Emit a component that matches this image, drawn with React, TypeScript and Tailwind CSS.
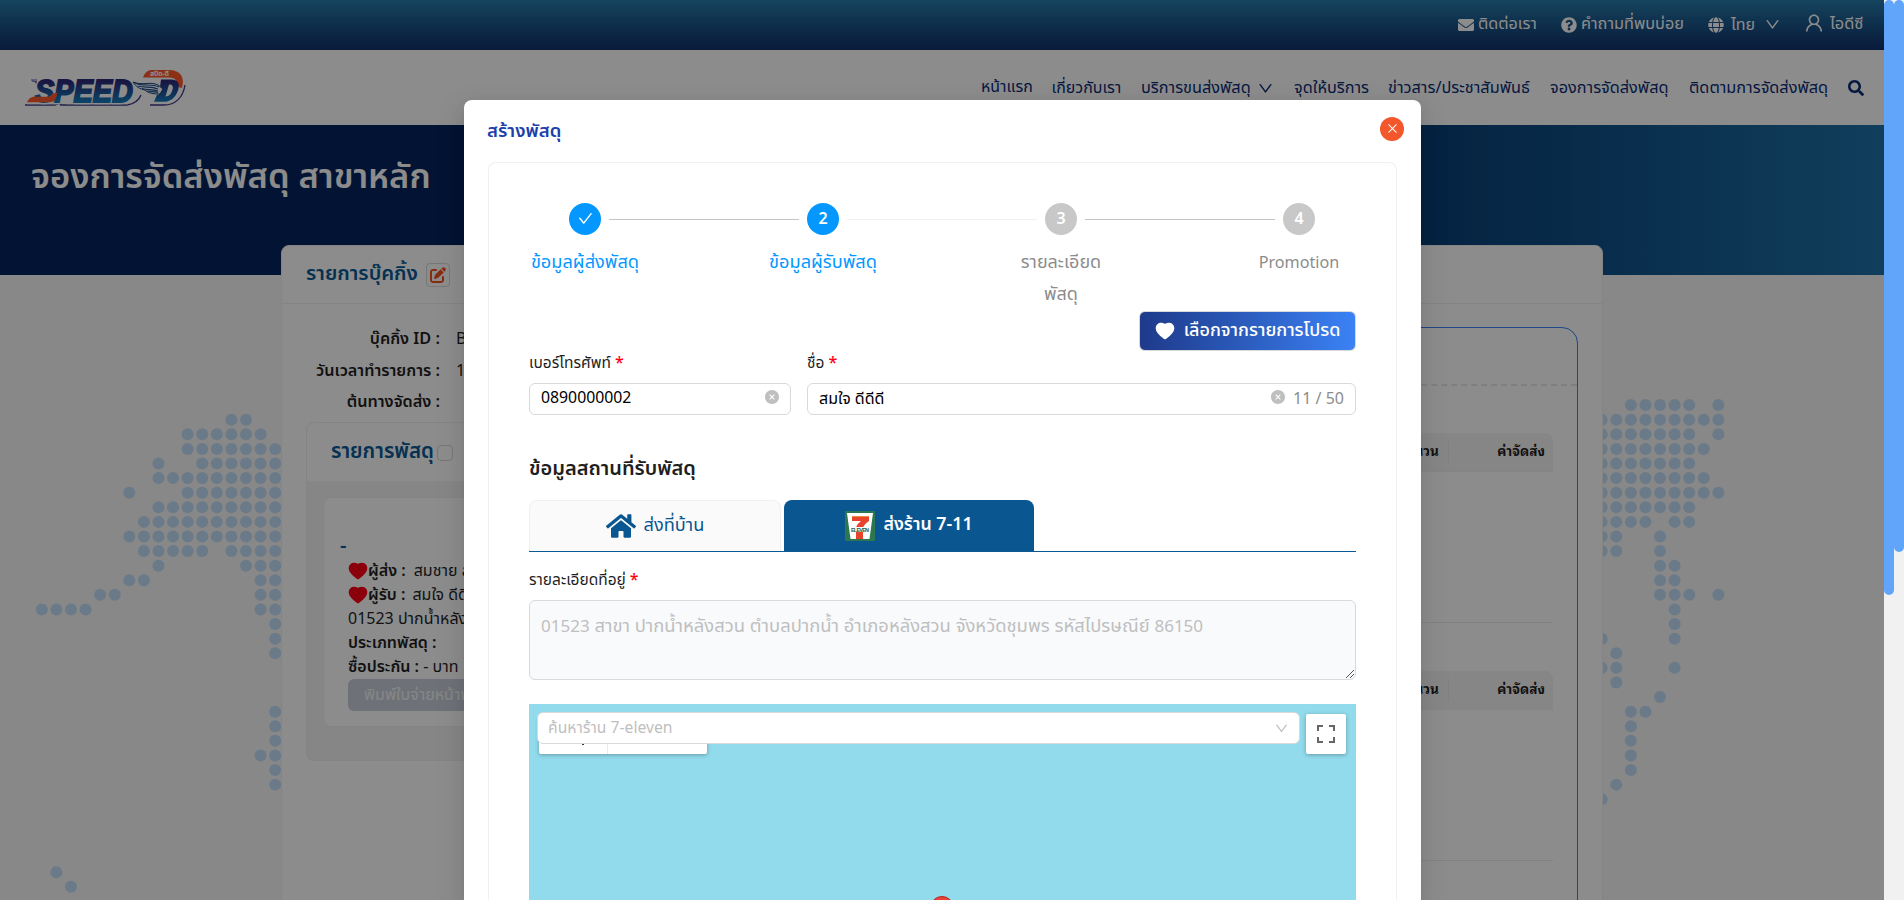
import React from "react";
import { FaEnvelope, FaQuestionCircle, FaGlobe, FaSearch, FaHome } from "react-icons/fa";
import { FaPenToSquare } from "react-icons/fa6";
import { AiOutlineDown, AiOutlineUser, AiOutlineCheck, AiFillCloseCircle, AiFillHeart, AiOutlineClose } from "react-icons/ai";

type Row = [number, number[]];

const range = (a: number, b: number) => Array.from({ length: b - a + 1 }, (_, i) => a + i);

const WEST: Row[] = [
  [0, [13, 14]],
  [1, range(10, 15)],
  [2, range(10, 16)],
  [3, [8, ...range(11, 16)]],
  [4, range(8, 16)],
  [5, [6, ...range(10, 16)]],
  [6, range(8, 16)],
  [7, range(7, 16)],
  [8, range(6, 16)],
  [9, [...range(7, 11), ...range(13, 16)]],
  [10, [8, 14, 15, 16]],
  [11, [6, 7, 15, 16]],
  [12, [4, 5, 15, 16]],
  [13, [0, 1, 2, 3, 15, 16]],
  [14, [16]],
  [15, [16]],
  [16, [16]],
  [20, [16]],
  [21, [16]],
  [22, [16]],
  [23, [15, 16]],
  [24, [16]],
  [25, [16]],
  [31, [1]],
  [32, [2]],
];

const EAST: Row[] = [
  [-1, [2, 3, 4, 5, 6, 8]],
  [0, range(0, 8)],
  [1, [...range(0, 6), 8]],
  [2, range(0, 7)],
  [3, range(0, 6)],
  [4, range(0, 7)],
  [5, range(0, 8)],
  [6, range(0, 6)],
  [7, [0, 1, 2, 3, 5, 6]],
  [8, [0, 1, 4]],
  [9, [0, 1, 4]],
  [10, [4, 5]],
  [11, [4, 5]],
  [12, [4, 5, 6, 8]],
  [13, [5]],
  [14, [5]],
  [15, [0, 5]],
  [16, [1]],
  [17, [0, 1, 5]],
  [18, [1]],
  [19, [4]],
  [20, [2, 3]],
  [21, [2]],
  [22, [2]],
  [23, [2]],
  [24, [2]],
  [25, [1]],
  [26, [0]],
];

function Dots({ rows, x }: { rows: Row[]; x: number }) {
  return (
    <>
      {rows.flatMap(([j, ks]) =>
        ks.map((k) => <circle key={`${j}-${k}`} cx={x + k * 14.585} cy={144.7 + j * 14.597} r={6} />)
      )}
    </>
  );
}

function WorldMap() {
  return (
    <svg className="absolute left-0 top-[275px] h-[625px] w-[1884px]" viewBox="0 0 1884 625" fill="#c1dff7">
      <Dots rows={WEST} x={41.8} />
      <Dots rows={EAST} x={1601.7} />
    </svg>
  );
}

function Logo() {
  const word = {
    x: 11,
    y: 33.5,
    fontSize: 31,
    fontWeight: 700,
    fontStyle: "italic",
    fontFamily: "Liberation Sans, sans-serif",
    textLength: 98,
    lengthAdjust: "spacingAndGlyphs" as const,
  };
  return (
    <svg className="h-[40px] w-[164px] overflow-visible" viewBox="0 0 164 40">
      <defs>
        <linearGradient id="ink" gradientUnits="userSpaceOnUse" x1="0" y1="10" x2="0" y2="34">
          <stop offset="0.15" stopColor="#2d2a7a" />
          <stop offset="0.95" stopColor="#1478b8" />
        </linearGradient>
      </defs>
      <path d="M1 37h30l4-2 2 2h66c7-1 12-5 14-10" fill="none" stroke="#3d3a8a" strokeWidth="1.400" />
      <path d="M3 35.500h30M42 35.500h62" fill="none" stroke="#fdfdff" strokeWidth="1.500" />
      <text {...word} fill="#fff" stroke="#fff" strokeWidth="4.500" strokeLinejoin="round">
        SPEED
      </text>
      <text {...word} fill="url(#ink)" stroke="url(#ink)" strokeWidth="1.800">
        SPEED
      </text>
      <path d="M8 13l5 1-2 1M7 12h6" fill="none" stroke="#3d3a8a" strokeWidth="0.800" />
      <path d="M3 34.200c2-4 4-5.500 8-5.500h12c3 0 4-1 5-3l5-1c0 2 0 3-1 5-1 3-3 4.500-7 4.500Z" fill="#ff5a2c" />
      <path
        d="M119 10c2-6 5-8 11-8h16c12 0 16 8 13 17-3 10-9 16-18 16h-14l3-8Z"
        fill="#fff"
        stroke="#fff"
        strokeWidth="2.500"
      />
      <path d="M126 37h14c11 0 19-7 21-20" fill="none" stroke="#3d3a8a" strokeWidth="1.300" />
      <path d="M119 9.500c2-5 4-7.500 10-7.500h16c12 0 16 8 13 18l-6-1.500c2-6-1-9-7-9Z" fill="#ff5a2c" />
      <path
        fillRule="evenodd"
        d="M137 11.500h10c8 0 9 5 7 11-3 8-8 11.300-15 11.300h-9l3-7h2Zm8 5-3.500 12c4 0 6-3 7-7 1-3 0-5-3.500-5Z"
        fill="url(#ink)"
      />
      <path d="M109 14c10 4 17-1 25 3l5 4-3 5c-7 0-12-1-15-4-5-1-9-3-12-8Z" fill="#fff" stroke="#1d4080" strokeWidth="1" />
      <path
        d="M111 15c8 4 16 0 24 4M114 18c7 2 13 0 20 3M118 20.500c6 2 10 0 16 2.500M123 23c4 1 7 0 11 1.500"
        fill="none"
        stroke="#1d5090"
        strokeWidth="1.200"
      />
      <text x="126" y="8.300" fontSize="7" fill="#fff" fontWeight="700" textLength="19" fontFamily="Noto Sans Thai, sans-serif">
        สปีด-ดี
      </text>
    </svg>
  );
}

function SevenLogo() {
  return (
    <svg className="h-[30px] w-[30px]" viewBox="0 0 30 30">
      <path fill="#2c7650" d="M0 0h30v30H0z" />
      <path fill="#fff" d="M2 2h26l-3.500 26H5.500Z" />
      <path fill="#f08a3c" d="M7 5h17v2H7z" />
      <path fill="#e8442b" d="M7 6h17v4c-4 3-6 5-6 8h-7c0-4 3-6 5-8H7Z" />
      <path fill="#e8442b" d="M11 21h7v7h-7z" />
      <path fill="#fff" d="M5 16h20v5H5z" />
      <text x="6" y="20.700" fontSize="5.500" fontWeight="700" fill="#2c5b46" textLength="18" fontFamily="Liberation Sans, sans-serif">
        ELEVEN
      </text>
    </svg>
  );
}

function TopBar() {
  return (
    <div className="flex h-[50px] items-center bg-linear-to-b from-[#287cab] to-[#103069] pl-[1458px] pb-px text-[16px] text-white">
      <FaEnvelope className="h-4 w-4" />
      <span className="ml-[4px] w-[83px] text-[16.200px]">ติดต่อเรา</span>
      <FaQuestionCircle className="h-4 w-4" />
      <span className="ml-1 w-[127px] text-[16.300px]">คำถามที่พบบ่อย</span>
      <FaGlobe className="h-4 w-4" />
      <span className="ml-[7px] w-[33px]">ไทย</span>
      <AiOutlineDown className="h-[17px] w-[17px]" />
      <AiOutlineUser className="ml-[22px] -mt-1 h-[22px] w-[22px]" />
      <span className="ml-[5px] text-[16.400px]">ไอดีซี</span>
    </div>
  );
}

function Nav() {
  return (
    <div className="flex h-[75px] items-center bg-white pl-[24px] text-[16.300px] text-[#0b2d75]">
      <Logo />
      <div className="ml-[793px] flex items-center pt-px">
        <span className="w-[70.500px] text-[15.900px]">หน้าแรก</span>
        <span className="w-[89.500px] text-[16px]">เกี่ยวกับเรา</span>
        <span className="w-[116px]">บริการขนส่งพัสดุ</span>
        <AiOutlineDown className="h-[17px] w-[17px]" />
        <span className="ml-[20px] w-[94px]">จุดให้บริการ</span>
        <span className="w-[162px]">ข่าวสาร/ประชาสัมพันธ์</span>
        <span className="w-[139px]">จองการจัดส่งพัสดุ</span>
        <span className="w-[159px]">ติดตามการจัดส่งพัสดุ</span>
        <FaSearch className="h-4 w-4" />
      </div>
    </div>
  );
}

function InfoRow({ label, value }: { label: string; value: string }) {
  return (
    <div className="flex h-[31.800px] items-center text-[16.200px]">
      <span className="w-[134px] text-right font-semibold">{label}</span>
      <span className="ml-[16px]">{value}</span>
    </div>
  );
}

function FeeTable() {
  return (
    <div className="h-[190px] border-b border-[#ececec]">
      <div className="flex h-[39px] items-center justify-end rounded-t-lg border-b border-[#f0f0f0] bg-[#f5f5f5] pb-[3px] pr-2 font-['Noto_Sans_Thai_Looped','Noto_Sans',sans-serif] text-[13.600px] font-bold">
        <span>จำนวน</span>
        <span className="ml-[9px] mt-[3px] h-[22px] w-px bg-[#ececec]" />
        <span className="w-[96px] text-right">ค่าจัดส่ง</span>
      </div>
    </div>
  );
}

function BookingCard() {
  return (
    <div className="relative ml-[281px] mt-[-30px] h-[760px] w-[1322px] rounded-t-lg border border-[#f0f0f0] bg-white text-[#1f1f1f]">
      <div className="flex h-[58px] items-center border-b border-[#f0f0f0] pl-[24px]">
        <span className="w-[120px] text-[20.300px] font-semibold text-[#0a5a96]">รายการบุ๊คกิ้ง</span>
        <span className="flex h-[24px] w-[24px] items-center justify-center rounded-[4px] border border-[#d9d9d9]">
          <FaPenToSquare className="h-4 w-4 text-[#f4511e]" />
        </span>
      </div>
      <div className="flex">
        <div className="w-[500px] pl-[24px] pt-[19px]">
          <div className="h-[99px]">
            <InfoRow label="บุ๊คกิ้ง ID :" value="BK" />
            <InfoRow label="วันเวลาทำรายการ :" value="15" />
            <InfoRow label="ต้นทางจัดส่ง :" value="" />
          </div>
          <div className="h-[339px] w-[460px] rounded-lg border border-[#f0f0f0] bg-[#f5f5f5]">
            <div className="flex h-[58px] items-center rounded-t-lg bg-white pl-[24px] pt-px">
              <span className="w-[106px] text-[20.500px] font-semibold text-[#0a5a96]">รายการพัสดุ</span>
              <span className="h-4 w-4 rounded-[4px] border border-[#d9d9d9]" />
            </div>
            <div className="ml-[16px] mt-[16px] h-[230px] w-[420px] rounded-lg border border-[#f0f0f0] bg-white pl-[16px] pt-[37px] text-[16px] leading-[24px]">
              <div className="-mt-px mb-px text-[20px] font-semibold text-[#0a5a96]">-</div>
              <div className="pl-2">
                <div className="flex items-center">
                  <AiFillHeart className="h-5 w-5 scale-[1.100] text-[#ff0015]" />
                  <b className="font-semibold">ผู้ส่ง :</b>
                  <span className="ml-2">สมชาย สุขใจ</span>
                </div>
                <div className="flex items-center">
                  <AiFillHeart className="h-5 w-5 scale-[1.100] text-[#ff0015]" />
                  <b className="font-semibold">ผู้รับ :</b>
                  <span className="ml-[7px]">สมใจ ดีดีดี</span>
                </div>
                <div>01523 ปากน้ำหลังสวน</div>
                <div className="font-semibold">ประเภทพัสดุ :</div>
                <div>
                  <b className="font-semibold">ซื้อประกัน :</b> - บาท
                </div>
                <div className="flex h-8 w-[200px] items-center rounded-md bg-[#c9ced9] pl-4 text-[#f5f5f5]">พิมพ์ใบจ่ายหน้าพัสดุ</div>
              </div>
            </div>
          </div>
        </div>
        <div className="mt-[23px] h-[700px] w-[796px] rounded-t-2xl border border-[#3b82f6]">
          <div className="h-[58px] border-b-2 border-dashed border-[#e8e8e8]" />
          <div className="flex flex-col gap-[48px] pl-6 pr-[24px] pt-[47px]">
            <FeeTable />
            <FeeTable />
          </div>
        </div>
      </div>
    </div>
  );
}

function Step({ n, active, done, children }: { n: number; active?: boolean; done?: boolean; children: React.ReactNode }) {
  return (
    <div className="flex w-[114px] shrink-0 flex-col items-center">
      <div
        className={
          active
            ? "flex h-8 w-8 items-center justify-center rounded-full bg-[#0498ff] text-[16px] font-semibold text-white"
            : "flex h-8 w-8 items-center justify-center rounded-full bg-[#c8c8c8] text-[16px] font-semibold text-white"
        }
      >
        {done ? <AiOutlineCheck className="-mt-[2px] h-[17px] w-[17px]" /> : n}
      </div>
      <div
        className={
          active
            ? "mt-[12px] text-center text-[18.200px] leading-[32px] text-[#0498ff]"
            : "mt-[12px] text-center text-[18px] leading-[32px] text-[#8c8c8c]"
        }
      >
        {children}
      </div>
    </div>
  );
}

function Line({ light }: { light?: boolean }) {
  return (
    <div className="mt-4 h-px w-[124px] shrink-0">
      <div className={light ? "-mx-[33px] h-px bg-[#f0f0f0]" : "-mx-[33px] h-px bg-[#c4c4c4]"} />
    </div>
  );
}

function Label({ children }: { children: React.ReactNode }) {
  return (
    <div className="h-[24px] text-[15.500px] leading-[24px] text-[#1f1f1f]">
      {children} <span className="text-[16px] font-medium text-[#ff0015]">*</span>
    </div>
  );
}

function Fullscreen() {
  return (
    <svg className="h-[18px] w-[18px]" viewBox="0 0 18 18" fill="#666">
      <path d="M0 0v6h2V2h4V0H0zm16 0h-4v2h4v4h2V0h-2zm0 16h-4v2h6v-6h-2v4zM2 12H0v6h6v-2H2v-4z" />
    </svg>
  );
}

function Modal() {
  return (
    <div className="absolute left-[464px] top-[100px] h-[800px] w-[957px] overflow-visible rounded-t-lg bg-white shadow-[0_6px_16px_0_rgba(0,0,0,0.08),0_3px_6px_-4px_rgba(0,0,0,0.12),0_9px_28px_8px_rgba(0,0,0,0.05)]">
      <div className="flex h-[62px] items-center justify-between pl-[23px] pr-[17px] text-[#1c3faa]">
        <span className="pt-[2px] text-[18.500px] font-semibold">สร้างพัสดุ</span>
        <span className="-mt-[5px] flex h-6 w-6 items-center justify-center rounded-full bg-[#f4572b]">
          <AiOutlineClose className="h-[13px] w-[13px] text-white" />
        </span>
      </div>
      <div className="ml-[24px] h-[738px] w-[909px] overflow-hidden rounded-t-lg border border-b-0 border-[#f0f0f0] px-[40px] pt-[40px]">
        <div className="-ml-px flex h-[108px]">
          <Step n={1} active done>
            ข้อมูลผู้ส่งพัสดุ
          </Step>
          <Line />
          <Step n={2} active>
            ข้อมูลผู้รับพัสดุ
          </Step>
          <Line light />
          <Step n={3}>
            รายละเอียด
            <br />
            พัสดุ
          </Step>
          <Line />
          <Step n={4}>
            <span className="text-[16.200px]">Promotion</span>
          </Step>
        </div>
        <div className="flex justify-end">
          <div className="flex h-[40px] w-[217px] items-center justify-center rounded-md border border-[#d9d9d9] bg-linear-to-r from-[#1e3a8a] to-[#3b82f6] pb-px text-[18px] text-white">
            <AiFillHeart className="mr-[9px] h-5 w-5 scale-[1.100]" />
            <span className="font-medium">เลือกจากรายการโปรด</span>
          </div>
        </div>
        <div className="flex gap-4">
          <div className="w-[262px]">
            <Label>เบอร์โทรศัพท์</Label>
            <div className="mt-[8px] flex h-8 items-center justify-between rounded-md border border-[#d9d9d9] pl-[11px] pr-[10px] text-[15.800px]">
              <span>0890000002</span>
              <AiFillCloseCircle className="-mt-1 h-4 w-4 text-[#bfbfbf]" />
            </div>
          </div>
          <div className="w-[549px]">
            <Label>ชื่อ</Label>
            <div className="mt-[8px] flex h-8 items-center rounded-md border border-[#d9d9d9] px-[11px] text-[16px]">
              <span>สมใจ ดีดีดี</span>
              <AiFillCloseCircle className="-mt-1 ml-auto h-4 w-4 text-[#bfbfbf]" />
              <span className="ml-[7px] text-[#8c8c8c]">11 / 50</span>
            </div>
          </div>
        </div>
        <div className="mt-[38px] h-[47px] pt-px text-[20px] font-semibold leading-[30px] text-[#1f1f1f]">ข้อมูลสถานที่รับพัสดุ</div>
        <div className="flex h-[52px] gap-[3px] border-b border-[#0a5a96] text-[16px]">
          <div className="flex w-[252px] items-center justify-center rounded-t-lg border border-b-0 border-[#f0f0f0] bg-[#fafafa] text-[#0a5690]">
            <FaHome className="mr-2 h-[30px] w-[30px]" />
            <span className="text-[18.200px]">ส่งที่บ้าน</span>
          </div>
          <div className="flex w-[250px] items-center justify-center rounded-t-lg bg-[#0a5690] text-white">
            <SevenLogo />
            <span className="ml-2 text-[17.800px] font-semibold">ส่งร้าน 7-11</span>
          </div>
        </div>
        <div className="mt-[16px]">
          <Label>รายละเอียดที่อยู่</Label>
        </div>
        <div className="relative mt-[8px] h-[80px] rounded-md border border-[#d9d9d9] bg-[#f9fafc] pl-[11px] pt-[13px] text-[18.400px] leading-[24px] text-[#bfbfbf]">
          <span className="text-[17px]">01523</span> สาขา ปากน้ำหลังสวน ตำบลปากน้ำ อำเภอหลังสวน จังหวัดชุมพร รหัสไปรษณีย์{" "}
          <span className="text-[17px]">86150</span>
          <svg className="absolute bottom-[1px] right-[1px] h-2 w-2" viewBox="0 0 8 8" stroke="#555" fill="none">
            <path d="M0 8L8 0M4 8L8 4" />
          </svg>
        </div>
        <div className="relative mt-[24px] h-[200px] overflow-hidden bg-[#92dbec]">
          <div className="absolute left-[10px] top-[14px] flex h-[36px] w-[168px] rounded-b-[2px] bg-white shadow-[0_1px_4px_rgba(0,0,0,0.3)]">
            <span className="w-[69px] border-r border-[#ebebeb]" />
            <span className="absolute left-[43px] top-[20px] h-[2px] w-[2px] translate-y-[5px] bg-[#333]" />
          </div>
          <div className="absolute left-[8px] top-[8px] flex h-8 w-[763px] items-center justify-between rounded-md border border-[#d9d9d9] bg-white px-[10px] pt-px text-[15.700px] text-[#bfbfbf]">
            <span>ค้นหาร้าน 7-eleven</span>
            <AiOutlineDown className="h-[15px] w-[15px]" />
          </div>
          <div className="absolute left-[777px] top-[10px] flex h-10 w-10 items-center justify-center rounded-[2px] bg-white shadow-[0_1px_4px_rgba(0,0,0,0.3)]">
            <Fullscreen />
          </div>
          <div className="absolute left-[401px] top-[192px] h-6 w-6 rounded-full border border-[#b3261e] bg-[#ea4335]" />
        </div>
      </div>
    </div>
  );
}

export default function App() {
  return (
    <div className="relative flex h-[900px] w-[1904px] overflow-hidden whitespace-nowrap bg-white font-['Noto_Sans_Thai','Noto_Sans',sans-serif]">
      <div className="relative h-[900px] w-[1884px] overflow-hidden bg-[#f7f7f7]">
        <TopBar />
        <Nav />
        <WorldMap />
        <div className="h-[150px] bg-linear-to-r from-[#04245d] from-30% via-[#083e76] via-75% to-[#1f72a8] pl-[31px] pt-[27px] text-[34.500px] font-semibold leading-[52px] text-white">
          จองการจัดส่งพัสดุ สาขาหลัก
        </div>
        <BookingCard />
        <div className="absolute inset-0 bg-black/45" />
        <Modal />
      </div>
      <div className="w-[10px] bg-[#f1f1f1]">
        <div className="h-[595px] rounded-[5px] bg-[#60a5fa]" />
      </div>
      <div className="w-[10px] bg-[#f1f1f1]">
        <div className="h-[552px] rounded-[5px] bg-[#60a5fa]" />
      </div>
    </div>
  );
}
